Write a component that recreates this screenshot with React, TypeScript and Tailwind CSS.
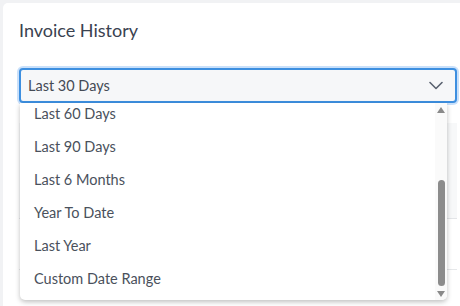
import React from 'react';

const options = ['Last 60 Days', 'Last 90 Days', 'Last 6 Months', 'Year To Date', 'Last Year', 'Custom Date Range'];

export default function App() {
  return (
    <div className="w-[460px] h-[306px] overflow-hidden bg-[#f1f2f4] pt-[3px] pl-[3px]" style={{ fontFamily: 'Lato, "Open Sans", sans-serif' }}>
      <div className="relative h-[310px] bg-white rounded-tl-[5px] pl-[16px] pr-[3px]">
        <h2 className="pt-[15px] text-[18px] leading-[24px] text-[#3a4250]">Invoice History</h2>

        <div className="relative mt-[26px]">
          <div className="h-[35px] flex items-center justify-between rounded-[4px] border-2 border-[#3d8fe0] bg-[#f6f7f9] pl-[7px] pr-[12px] shadow-[0_0_0_2px_rgba(100,165,240,0.35)]">
            <span className="text-[14.5px] text-[#444a55]">Last 30 Days</span>
            <svg width="14" height="9" viewBox="0 0 14 9" fill="none">
              <path d="M1 1.5 L7 7.5 L13 1.5" stroke="#5a6270" strokeWidth="1.6" strokeLinecap="round" strokeLinejoin="round" />
            </svg>
          </div>

          {/* content behind the open list */}
          <div className="mt-[20px] h-[96px] bg-[#f7f8f9] border-b border-[#e3e5e8]" />
          <div className="h-[51px] border-b border-[#e6e8ea]" />

          <div className="absolute left-[1px] top-[35px] w-[427px] h-[197px] bg-white rounded-b-[5px] shadow-[0_2px_5px_rgba(0,0,0,0.25)] flex overflow-hidden">
            <ul className="flex-1 -mt-[6px]">
              {options.map((o) => (
                <li key={o} className="h-[33px] flex items-center pl-[14px] text-[14.5px] text-[#4a515c]">{o}</li>
              ))}
            </ul>
            <div className="w-[12px] bg-[#fafafa] flex flex-col items-center pt-[4px] pb-[3px]">
              <div className="w-0 h-0 border-l-[4px] border-r-[4px] border-b-[6px] border-l-transparent border-r-transparent border-b-[#8a8a8a]" />
              <div className="flex-1" />
              <div className="w-[7px] h-[106px] rounded-full bg-[#8c8c8c]" />
              <div className="mt-[5px] w-0 h-0 border-l-[4px] border-r-[4px] border-t-[6px] border-l-transparent border-r-transparent border-t-[#8a8a8a]" />
            </div>
          </div>
        </div>
      </div>
    </div>
  );
}
